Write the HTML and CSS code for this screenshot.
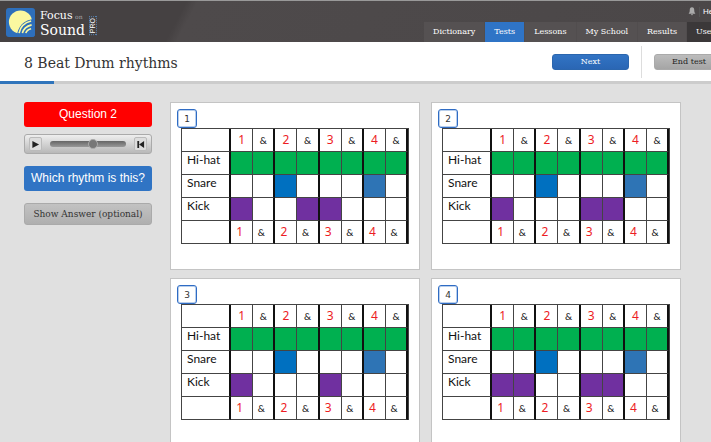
FILE: index.html
```
<!DOCTYPE html>
<html lang="en">
<head>
<meta charset="utf-8">
<title>Focus on Sound Pro</title>
<link rel="stylesheet" href="styles.css">
</head>
<body>
<header class="top">
  <a class="brand" href="#" aria-label="Focus on Sound Pro">
    <svg class="logo" viewBox="0 0 30 30" aria-hidden="true">
      <defs><clipPath id="tile"><rect width="30" height="30" rx="3"/></clipPath></defs>
      <rect width="30" height="30" rx="3" fill="#2e6fbb"/>
      <g clip-path="url(#tile)">
        <circle cx="15" cy="14.500" r="12" fill="#fbf8a0"/>
        <path d="M11 30C12 19 18 12 30 11V30Z" fill="#2e6fbb"/>
        <g fill="none" stroke="#fbf8a0" stroke-width="1.700">
          <path d="M13.500 26Q15.500 16 26 13.500"/>
          <path d="M17 26Q18.500 19.500 26.500 17.500"/>
          <path d="M20.500 26Q21.500 22.500 26 21.500"/>
        </g>
      </g>
    </svg>
    <span class="words">
      <span class="line">Focus <small>on</small></span>
      <span class="line sound">Sound</span>
    </span>
    <span class="pro">PRO</span>
  </a>
  <div class="menus">
    <div class="utility">
      <svg class="bell" viewBox="0 0 8 10" aria-hidden="true"><path d="M4 .3C5.800.3 6.500 1.800 6.500 3.500C6.500 5.500 7 6.300 7.800 7.500H.2C1 6.300 1.500 5.500 1.500 3.500C1.500 1.800 2.200.3 4 .3ZM2.800 8H5.200A1.200 1.200 0 0 1 2.800 8Z" fill="#aaa"/></svg>
      <a class="help" href="#">Help</a>
    </div>
    <nav class="nav">
      <a href="#">Dictionary</a>
      <a class="active" href="#">Tests</a>
      <a href="#">Lessons</a>
      <a href="#">My School</a>
      <a href="#">Results</a>
      <a class="dark" href="#">Users</a>
    </nav>
  </div>
</header>
<section class="bar">
  <h1>8 Beat Drum rhythms</h1>
  <button class="btn next" type="button">Next</button>
  <div class="end"><button class="btn grey" type="button">End test</button></div>
</section>
<div class="progress"><div class="done"></div></div>
<main class="content">
  <aside class="side">
    <div class="tag red">Question 2</div>
    <div class="player">
      <button type="button" aria-label="Play"><svg viewBox="0 0 10 10"><path d="M1.500 1L9 5L1.500 9Z" fill="#222"/></svg></button>
      <input type="range" min="0" max="100" value="58" aria-label="Position">
      <button type="button" aria-label="Back to start"><svg viewBox="0 0 10 10"><path d="M1.500 1H3.500V9H1.500ZM9 1V9L3.500 5Z" fill="#222"/></svg></button>
    </div>
    <div class="tag blue">Which rhythm is this?</div>
    <button class="btn answer" type="button">Show Answer (optional)</button>
  </aside>
  <div class="cards" id="cards"></div>
</main>
<script src="grids.js"></script>
</body>
</html>
```
FILE: styles.css
```
* { box-sizing: border-box; }
body {
  margin: 0;
  height: 100vh;
  overflow: hidden;
  background: #e0e0e0;
  font-family: "DejaVu Serif", serif;
  color: #333;
}
a { color: inherit; text-decoration: none; }
button { font: inherit; color: inherit; padding: 0; }

.top {
  display: flex;
  justify-content: space-between;
  height: 42px;
  border-top: 1px solid #999;
  background: linear-gradient(118deg, #454142 0, #454142 165px, #4e4a4b 175px, #4b4748 100%);
  color: #fff;
}
.brand { display: flex; align-items: flex-start; padding: 7px 0 0 6px; }
.logo { width: 29px; height: 29px; }
.words { display: flex; flex-direction: column; margin-left: 5px; }
.line { font-size: 11px; line-height: 15px; white-space: nowrap; }
.line small { margin-left: -1px; font-size: 6px; color: #aaa; }
.sound { font-size: 14px; line-height: 12px; }
.pro {
  margin: 8px 0 0 4px;
  padding: 1px 0;
  border: 1px dotted #5680ad;
  writing-mode: vertical-rl;
  transform: rotate(180deg);
  font: 7px/6px "Liberation Sans", sans-serif;
}
.menus { flex: 0 0 287px; min-width: 0; display: flex; flex-direction: column; }
.utility { height: 21px; display: flex; align-items: center; padding-left: 264px; }
.bell { flex: none; width: 8px; height: 9px; }
.help {
  margin-left: 3px;
  padding-left: 3px;
  border-left: 1px solid #555;
  font: 8px/10px "Liberation Sans", sans-serif;
}
.nav { display: flex; gap: 1px; height: 20px; background: #514d4e; }
.nav a {
  flex: none;
  padding: 0 9px;
  background: #555152;
  font-size: 8px;
  line-height: 20px;
}
.nav .active { background: #2f74c6; }
.nav .dark { background: #3b3839; }

.bar { display: flex; align-items: center; height: 39px; padding-left: 24px; background: #fff; }
h1 { margin: 0 auto 0 0; padding-top: 2px; font-size: 14px; line-height: 18px; font-weight: 400; white-space: nowrap; }
.btn { border: 1px solid #aaa; border-radius: 3px; font-size: 8px; line-height: 14px; }
.next { width: 77px; margin-right: 12px; border-color: #2b66ae; background: linear-gradient(#3274c4, #2a66b4); color: #fff; }
.end {
  display: flex;
  align-items: center;
  flex: 0 0 70px;
  min-width: 0;
  height: 32px;
  padding-left: 12px;
  border-left: 1px solid #ddd;
}
.grey { flex: none; width: 70px; background: linear-gradient(#bcbcbc, #a5a5a5); color: #222; }
.progress { height: 3px; background: #ccc; }
.done { width: 54px; height: 100%; background: #2f74bb; }

.content { display: flex; padding: 18px 30px 0 24px; }
.side { flex: 0 0 128px; min-width: 0; margin-right: 18px; }
.tag {
  border-radius: 3px;
  color: #fff;
  font: 12px/25px "Liberation Sans", sans-serif;
  text-align: center;
  white-space: nowrap;
}
.red { background: #f00; }
.blue { background: #3074c4; }
.player {
  display: flex;
  align-items: center;
  gap: 8px;
  height: 20px;
  margin: 7px 0 12px;
  padding: 0 4px;
  border: 1px solid #aaa;
  border-radius: 3px;
  background: linear-gradient(#eee, #b8b8b8);
}
.player button {
  display: flex;
  align-items: center;
  justify-content: center;
  flex: none;
  width: 13px;
  height: 14px;
  border: 1px solid #bbb;
  border-radius: 2px;
  background: #ddd;
}
.player svg { width: 9px; height: 9px; }
.player input { appearance: none; flex: 1; width: 0; min-width: 0; height: 10px; margin: 0; background: none; }
.player input::-webkit-slider-runnable-track {
  height: 6px;
  border-radius: 3px;
  background: linear-gradient(#666, #999);
}
.player input::-webkit-slider-thumb {
  appearance: none;
  width: 10px;
  height: 10px;
  margin-top: -2px;
  border: 1px solid #aaa;
  border-radius: 50%;
  background: #777;
}
.answer {
  width: 100%;
  height: 22px;
  margin-top: 12px;
  background: linear-gradient(#c2c2c2, #afafaf);
  font-size: 9px;
  white-space: nowrap;
}

.cards { flex: 1; display: grid; grid-template-columns: 1fr 1fr; gap: 8px 11px; }
.card {
  height: 168px;
  padding: 6px 10px 0;
  border: 1px solid #c4c4c4;
  background: #fff;
  font-family: Lato, sans-serif;
}
.pick {
  display: block;
  width: 20px;
  height: 19px;
  margin-left: -4px;
  border: 1px solid #2f6cc4;
  border-radius: 3px;
  background: #fff;
  box-shadow: inset 0 0 0 1px #b9cfec;
  font: 9px/16px "DejaVu Sans", sans-serif;
  text-align: center;
}
.grid {
  width: 100%;
  table-layout: fixed;
  border-spacing: 0;
  border: solid #444;
  border-width: 1px 1px 0 1px;
  color: #111;
}
.grid th, .grid td {
  height: 23px;
  padding: 0;
  border: solid #444;
  border-width: 0 1px 1px 0;
  font-size: 10px;
  font-weight: 400;
  line-height: 12px;
  text-align: center;
}
.grid th:nth-child(odd), .grid td:nth-child(odd) { border-right: 2px solid #111; }
.grid .name { width: 49px; padding: 0 0 7px 5px; font-size: 12px; text-align: left; }
.grid .beat { font: 12px/16px "Noto Sans", sans-serif; color: #ed1c24; }
.grid tfoot td { padding-right: 4px; }
.hat { background: #00b050; }
.snare { background: #0070c0; }
.late { background: #2e74b5; }
.kick { background: #7030a0; }
```
FILE: grids.js
```
const kicks = [[0, 3, 4], [0, 4, 5], [0, 4], [0, 1, 4, 5]];
const steps = [0, 1, 2, 3, 4, 5, 6, 7];

const countRow = steps
  .map(s => s % 2 ? '<td>&amp;</td>' : `<td class="beat">${s / 2 + 1}</td>`)
  .join('');

const row = (name, paint) =>
  `<tr><th class="name" scope="row">${name}</th>` +
  steps.map(s => `<td class="${paint(s)}"></td>`).join('') + '</tr>';

document.getElementById('cards').innerHTML = kicks.map((kick, i) => `
  <section class="card">
    <button class="pick" type="button">${i + 1}</button>
    <table class="grid">
      <thead><tr><td class="name"></td>${countRow}</tr></thead>
      <tbody>
        ${row('Hi-hat', () => 'hat')}
        ${row('Snare', s => s === 2 ? 'snare' : s === 6 ? 'late' : '')}
        ${row('Kick', s => kick.includes(s) ? 'kick' : '')}
      </tbody>
      <tfoot><tr><td class="name"></td>${countRow}</tr></tfoot>
    </table>
  </section>`).join('');
```
